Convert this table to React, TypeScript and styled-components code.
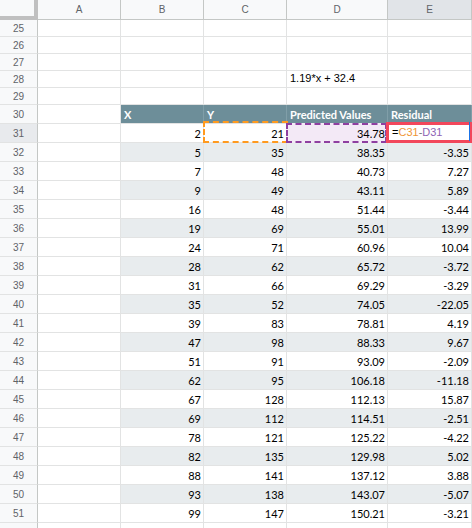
import React from "react";
import styled, { createGlobalStyle } from "styled-components";

const Global = createGlobalStyle`
  html, body { margin: 0; padding: 0; background: #fff; }
  body { width: 472px; height: 528px; overflow: hidden; }
`;

const COLS = "38px 83px 83px 83px 101px 84px";

const Sheet = styled.div`
  width: 472px;
  height: 528px;
  overflow: hidden;
  display: flex;
  flex-direction: column;
  font-family: "Lato", "Open Sans", sans-serif;
  font-size: 11px;
  color: #000;
`;

const Row = styled.div<{ $h: number }>`
  display: grid;
  grid-template-columns: ${COLS};
  height: ${(p) => p.$h}px;
  flex: none;
`;

const Corner = styled.div`
  box-sizing: border-box;
  background: #f8f9fa;
  border-right: 4px solid #c0c0c0;
  border-bottom: 4px solid #c0c0c0;
`;

const ColHead = styled.div<{ $sel?: boolean }>`
  box-sizing: border-box;
  background: ${(p) => (p.$sel ? "#e1e4e8" : "#f8f9fa")};
  border-right: 1px solid #c4c7c5;
  border-bottom: 1px solid #c4c7c5;
  display: flex;
  align-items: center;
  justify-content: center;
  font-family: "Liberation Sans", Arial, sans-serif;
  font-size: 10px;
  color: #5f6368;
`;

const RowHead = styled.div<{ $sel?: boolean }>`
  box-sizing: border-box;
  background: ${(p) => (p.$sel ? "#e8eaed" : "#f8f9fa")};
  border-right: 1px solid #c4c7c5;
  border-bottom: 1px solid #e2e3e3;
  display: flex;
  align-items: center;
  justify-content: center;
  font-family: "Liberation Sans", Arial, sans-serif;
  font-size: 10px;
  color: #5f6368;
`;

const Cell = styled.div<{ $stripe?: boolean; $head?: boolean; $left?: boolean }>`
  position: relative;
  box-sizing: border-box;
  background: ${(p) => (p.$head ? "#6d8e99" : p.$stripe ? "#e8ecee" : "#fff")};
  border-right: 1px solid ${(p) => (p.$head ? "#809ea8" : "#e2e3e3")};
  border-bottom: 1px solid #e2e3e3;
  display: flex;
  align-items: flex-end;
  justify-content: ${(p) => (p.$left ? "flex-start" : "flex-end")};
  padding: 0 2px 1px 3px;
  white-space: nowrap;
  color: ${(p) => (p.$head ? "#fff" : "#000")};
  font-weight: ${(p) => (p.$head ? 700 : 400)};
  line-height: 15px;
`;

const PlainText = styled.span`
  font-family: "Liberation Sans", Arial, sans-serif;
  font-size: 11px;
`;

const Marquee = styled.div<{ $color: string; $fill?: string }>`
  position: absolute;
  box-sizing: border-box;
  border: 2px dashed ${(p) => p.$color};
  background: ${(p) => p.$fill ?? "transparent"};
  pointer-events: none;
`;

const OrangeBox = styled(Marquee)`
  top: -3px;
  left: -1px;
  right: -2px;
  bottom: -1px;
`;

const PurpleBox = styled(Marquee)`
  top: -1px;
  left: -1px;
  right: 0px;
  bottom: -1px;
  z-index: 0;
`;

const CellValue = styled.span`
  position: relative;
  z-index: 1;
`;

const Editor = styled.div`
  position: absolute;
  top: -2px;
  left: -2px;
  right: -1px;
  bottom: -1px;
  box-sizing: border-box;
  border: 3px solid #f2475b;
  background: #fff;
  z-index: 2;
  display: flex;
  align-items: center;
  padding-left: 3px;
  font-family: "Liberation Sans", Arial, sans-serif;
  font-size: 11px;
  &::after {
    content: "";
    position: absolute;
    right: -1px;
    top: -3px;
    bottom: -1px;
    width: 1px;
    background: #1a73e8;
  }
`;

const Ref = styled.span<{ $c: string }>`
  color: ${(p) => p.$c};
`;

const data: [number, number, string, string][] = [
  [2, 21, "34.78", ""],
  [5, 35, "38.35", "-3.35"],
  [7, 48, "40.73", "7.27"],
  [9, 49, "43.11", "5.89"],
  [16, 48, "51.44", "-3.44"],
  [19, 69, "55.01", "13.99"],
  [24, 71, "60.96", "10.04"],
  [28, 62, "65.72", "-3.72"],
  [31, 66, "69.29", "-3.29"],
  [35, 52, "74.05", "-22.05"],
  [39, 83, "78.81", "4.19"],
  [47, 98, "88.33", "9.67"],
  [51, 91, "93.09", "-2.09"],
  [62, 95, "106.18", "-11.18"],
  [67, 128, "112.13", "15.87"],
  [69, 112, "114.51", "-2.51"],
  [78, 121, "125.22", "-4.22"],
  [82, 135, "129.98", "5.02"],
  [88, 141, "137.12", "3.88"],
  [93, 138, "143.07", "-5.07"],
  [99, 147, "150.21", "-3.21"],
];

export default function App() {
  return (
    <>
      <Global />
      <Sheet>
        <Row $h={20}>
          <Corner />
          <ColHead>A</ColHead>
          <ColHead>B</ColHead>
          <ColHead>C</ColHead>
          <ColHead>D</ColHead>
          <ColHead $sel>E</ColHead>
        </Row>
        {[25, 26, 27, 28, 29].map((n) => (
          <Row $h={17} key={n}>
            <RowHead>{n}</RowHead>
            <Cell />
            <Cell />
            <Cell />
            <Cell $left>{n === 28 ? <PlainText>1.19*x + 32.4</PlainText> : null}</Cell>
            <Cell />
          </Row>
        ))}
        <Row $h={19}>
          <RowHead>30</RowHead>
          <Cell />
          <Cell $head $left>X</Cell>
          <Cell $head $left>Y</Cell>
          <Cell $head $left>Predicted Values</Cell>
          <Cell $head $left>Residual</Cell>
        </Row>
        {data.map(([x, y, p, r], i) => {
          const n = 31 + i;
          const stripe = i % 2 === 1;
          const first = i === 0;
          return (
            <Row $h={19} key={n}>
              <RowHead $sel={first}>{n}</RowHead>
              <Cell />
              <Cell $stripe={stripe}>{x}</Cell>
              <Cell $stripe={stripe}>
                {first && <OrangeBox $color="#ff9a1f" />}
                <CellValue>{y}</CellValue>
              </Cell>
              <Cell $stripe={stripe}>
                {first && <PurpleBox $color="#8e3fa0" $fill="#f3e9f6" />}
                <CellValue>{p}</CellValue>
              </Cell>
              <Cell $stripe={stripe}>
                {first ? (
                  <Editor>
                    =<Ref $c="#f09535">C31</Ref>
                    <Ref $c="#777">-</Ref>
                    <Ref $c="#8e63b5">D31</Ref>
                  </Editor>
                ) : (
                  r
                )}
              </Cell>
            </Row>
          );
        })}
        <Row $h={19}>
          <RowHead>52</RowHead>
          <Cell />
          <Cell />
          <Cell />
          <Cell />
          <Cell />
        </Row>
      </Sheet>
    </>
  );
}
